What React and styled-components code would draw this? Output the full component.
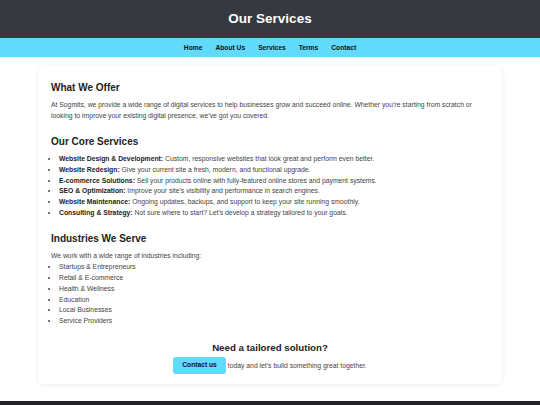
import React from 'react';
import styled, { createGlobalStyle } from 'styled-components';

const GlobalStyle = createGlobalStyle`
  * {
    box-sizing: border-box;
  }

  body {
    margin: 0;
    background: #fff;
    font-family: 'Liberation Sans', Arial, Helvetica, sans-serif;
    color: #444;
  }
`;

const Header = styled.header`
  display: flex;
  align-items: center;
  justify-content: center;
  height: 38px;
  background: #36393f;
`;

const Title = styled.h1`
  margin: 0;
  font-size: 13.5px;
  font-weight: 700;
  line-height: 1;
  color: #fff;
`;

const Nav = styled.nav`
  display: flex;
  justify-content: center;
  align-items: center;
  gap: 13px;
  height: 19px;
  background: #61dafb;
`;

const NavLink = styled.a`
  font-size: 6.7px;
  font-weight: 700;
  color: #111;
  text-decoration: none;
`;

const Main = styled.main`
  padding: 9px 38px 17px;
`;

const Card = styled.section`
  display: flex;
  flex-flow: column;
  padding: 16px 13px 10px;
  background: #fff;
  border-radius: 5px;
  box-shadow: 0 1px 5px rgba(0, 0, 0, 0.08);
`;

const Heading = styled.h2`
  margin: ${props => (props.first ? '0' : '14.5px')} 0 6px;
  font-size: 10px;
  line-height: 12px;
  font-weight: 700;
  color: #222;
`;

const Text = styled.p`
  margin: 0;
  font-size: 6.8px;
  line-height: 10.8px;
  color: #444;
`;

const List = styled.ul`
  margin: 0;
  padding-left: 8px;
  font-size: 6.8px;
  line-height: 10.8px;
  color: #444;

  strong {
    color: #222;
  }
`;

const Cta = styled.div`
  display: flex;
  flex-flow: column;
  align-items: center;
  margin-top: 15.5px;
`;

const CtaHeading = styled.h3`
  margin: 0 0 3.5px;
  font-size: 9.7px;
  line-height: 11.4px;
  font-weight: 700;
  color: #222;
`;

const CtaRow = styled.div`
  display: flex;
  align-items: center;
  gap: 2px;
  font-size: 6.8px;
  color: #444;
`;

const Button = styled.a`
  display: inline-block;
  padding: 5px 9px;
  font-size: 6.7px;
  line-height: 1;
  font-weight: 700;
  color: #111;
  background: #61dafb;
  border-radius: 3px;
  text-decoration: none;
`;

const Footer = styled.footer`
  height: 40px;
  background: #20212b;
`;

const services = [
  ['Website Design & Development:', 'Custom, responsive websites that look great and perform even better.'],
  ['Website Redesign:', 'Give your current site a fresh, modern, and functional upgrade.'],
  ['E-commerce Solutions:', 'Sell your products online with fully-featured online stores and payment systems.'],
  ['SEO & Optimization:', 'Improve your site\u2019s visibility and performance in search engines.'],
  ['Website Maintenance:', 'Ongoing updates, backups, and support to keep your site running smoothly.'],
  ['Consulting & Strategy:', 'Not sure where to start? Let\u2019s develop a strategy tailored to your goals.'],
];

const industries = [
  'Startups & Entrepreneurs',
  'Retail & E-commerce',
  'Health & Wellness',
  'Education',
  'Local Businesses',
  'Service Providers',
];

export default function App() {
  return (
    <>
      <GlobalStyle />
      <Header>
        <Title>Our Services</Title>
      </Header>
      <Nav>
        <NavLink href="#">Home</NavLink>
        <NavLink href="#">About Us</NavLink>
        <NavLink href="#">Services</NavLink>
        <NavLink href="#">Terms</NavLink>
        <NavLink href="#">Contact</NavLink>
      </Nav>
      <Main>
        <Card>
          <Heading first>What We Offer</Heading>
          <Text>
            At Sogmits, we provide a wide range of digital services to help businesses grow and succeed online. Whether
            you&rsquo;re starting from scratch or looking to improve your existing digital presence, we&rsquo;ve got you covered.
          </Text>

          <Heading>Our Core Services</Heading>
          <List>
            {services.map(([label, text]) => (
              <li key={label}>
                <strong>{label}</strong> {text}
              </li>
            ))}
          </List>

          <Heading>Industries We Serve</Heading>
          <Text>We work with a wide range of industries including:</Text>
          <List>
            {industries.map(item => (
              <li key={item}>{item}</li>
            ))}
          </List>

          <Cta>
            <CtaHeading>Need a tailored solution?</CtaHeading>
            <CtaRow>
              <Button href="#">Contact us</Button>
              <span>today and let&rsquo;s build something great together.</span>
            </CtaRow>
          </Cta>
        </Card>
      </Main>
      <Footer />
    </>
  );
}
